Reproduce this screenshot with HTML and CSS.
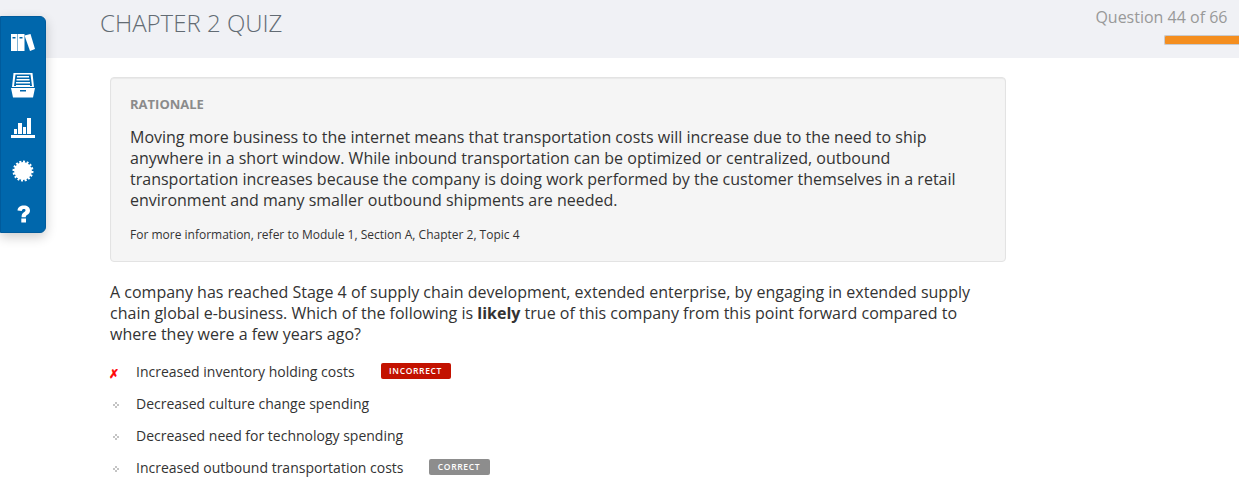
FILE: index.html
```html
<!DOCTYPE html>
<html lang="en">
<head>
<meta charset="utf-8">
<title>Chapter 2 Quiz</title>
<link rel="stylesheet" href="styles.css">
</head>
<body>
<header class="header">
  <h1 class="title">CHAPTER 2 QUIZ</h1>
  <div class="progress">
    <div class="count">Question 44 of 66</div>
    <div class="bar"></div>
  </div>
</header>
<nav class="sidebar">
  <svg class="icon" viewBox="0 0 26 26" fill="#fff"><path fill-rule="evenodd" d="M1 4h6.500v17H1zM2.500 7v1.500h3V7zM8 4h6.500v17H8zM9.500 7v1.500h3V7z"/><path d="M14.500 5.500l6-1.500 4.500 15-5 2z"/></svg>
  <svg class="icon" viewBox="0 0 26 26" fill="#fff"><path fill-rule="evenodd" d="M3.500 0h19L24 14H2zM5.500 1.500L4 13h18L20.500 1.500z"/><path d="M7 3h12v1.500H7zM6.500 6h13v1.500h-13zM6 9h14v1.500H6zM6 12h14v1.500H6z"/><path fill-rule="evenodd" d="M1 15h24l-2 9.500H3zM10 17v1.500h6V17z"/></svg>
  <svg class="icon" viewBox="0 0 26 26" fill="#fff"><path d="M1 19h24v3H1zM4 13h3v5H4zM8 7h4v11H8zM13 11h3v7h-3zM17 2h4v16h-4z"/></svg>
  <svg class="icon" viewBox="0 0 26 26" fill="#fff"><circle cx="13" cy="13" r="8.900"/><circle cx="13" cy="13" r="9.200" fill="none" stroke="#fff" stroke-width="2.600" pathLength="32" stroke-dasharray="1.100 .9"/></svg>
  <svg class="icon" viewBox="0 0 26 26" fill="#fff"><path d="M7.500 9.500C7.800 6 10.300 4.500 13.800 4.500c3.800 0 6.200 2 6.200 5 0 2.400-1.300 3.500-3 4.500-1 .7-1.200 1.100-1.200 2.200h-4.200c0-2.700.5-3.700 2.300-5 1.200-.8 1.600-1.100 1.600-1.900 0-.8-.6-1.300-1.600-1.300-1.200 0-1.900.6-2.100 2zM11.300 17.500h4.700v4h-4.700z"/></svg>
</nav>
<main class="content">
  <section class="rationale">
    <h2 class="label">RATIONALE</h2>
    <p class="copy">Moving more business to the internet means that transportation costs will increase due to the need to ship<br>anywhere in a short window. While inbound transportation can be optimized or centralized, outbound<br>transportation increases because the company is doing work performed by the customer themselves in a retail<br>environment and many smaller outbound shipments are needed.</p>
    <p class="more">For more information, refer to Module 1, Section A, Chapter 2, Topic 4</p>
  </section>
  <p class="question copy">A company has reached Stage 4 of supply chain development, extended enterprise, by engaging in extended supply<br>chain global e-business. Which of the following is <b>likely</b> true of this company from this point forward compared to<br>where they were a few years ago?</p>
  <ul class="answers">
    <li class="answer"><span class="mark wrong">✗</span><span class="choice">Increased inventory holding costs</span><span class="badge incorrect">INCORRECT</span></li>
    <li class="answer"><span class="mark"><svg class="dots" viewBox="0 0 6 6"><path d="M2 0h2v2H2zM0 2h2v2H0zM4 2h2v2H4zM2 4h2v2H2z"/></svg></span><span class="choice">Decreased culture change spending</span></li>
    <li class="answer"><span class="mark"><svg class="dots" viewBox="0 0 6 6"><path d="M2 0h2v2H2zM0 2h2v2H0zM4 2h2v2H4zM2 4h2v2H2z"/></svg></span><span class="choice">Decreased need for technology spending</span></li>
    <li class="answer"><span class="mark"><svg class="dots" viewBox="0 0 6 6"><path d="M2 0h2v2H2zM0 2h2v2H0zM4 2h2v2H4zM2 4h2v2H2z"/></svg></span><span class="choice">Increased outbound transportation costs</span><span class="badge correct">CORRECT</span></li>
  </ul>
</main>
</body>
</html>
```
FILE: styles.css
```css
* { box-sizing: border-box; }
body { margin: 0; height: 485px; overflow: hidden; background: #fff; color: #333; font: 16px/21px "Open Sans", sans-serif; }
h1, h2, p, ul { margin: 0; padding: 0; }
.header { height: 58px; background: #f0f1f5; display: flex; justify-content: space-between; padding-left: 100px; }
.title { font-size: 24px; line-height: 32px; font-weight: 300; color: #626b73; padding-top: 7px; white-space: nowrap; }
.progress { display: flex; flex-direction: column; align-items: flex-end; }
.count { color: #999; padding: 7px 11.5px 0 0; white-space: nowrap; }
.bar { width: 75px; height: 10px; margin-top: 7px; background: #f48e1f; border: 1px solid #c9cacd; border-right: 0; border-radius: 2px 0 0 2px; }
.sidebar { position: absolute; left: 0; top: 16px; width: 46px; height: 217px; padding: 13px 0 5px; display: flex; flex-direction: column; align-items: center; justify-content: space-between; background: #0067ac; border: 1px solid #005b9c; border-radius: 0 6px 6px 0; box-shadow: 0 4px 12px rgba(0,0,0,.2); }
.icon { width: 26px; height: 26px; }
.content { width: 896px; margin: 19px 0 0 110px; }
.rationale { height: 185px; padding: 16px 19px; background: #f5f5f5; border: 1px solid #e3e3e3; border-radius: 4px; box-shadow: inset 0 1px 1px rgba(0,0,0,.05); }
.label { font-size: 13px; line-height: 20px; font-weight: 700; color: #8b8b8b; margin-bottom: 13px; }
.copy { white-space: nowrap; letter-spacing: .003px; }
.more { font-size: 12px; line-height: 20px; margin-top: 14px; }
.question { margin-top: 20px; }
.answers { list-style: none; margin-top: 10px; }
.answer { height: 32px; display: flex; align-items: center; font-size: 14px; white-space: nowrap; }
.mark { width: 26px; display: flex; padding-left: 3px; }
.wrong { color: #f00; font: bold 12px/16px "DejaVu Sans", sans-serif; padding-left: 0; padding-top: 6px; text-indent: -1px; -webkit-text-stroke: .6px #f00; }
.dots { width: 6px; height: 6px; margin-top: 4px; fill: #c4c4c4; }
.badge { height: 16px; margin: -1px 0 0 26px; color: #fff; font-size: 8.5px; line-height: 16px; font-weight: 600; letter-spacing: .65px; border-radius: 2px; text-align: center; }
.incorrect { width: 70px; background: #c31200; }
.correct { width: 61px; margin-left: 25px; background: #8d8d8d; }
```
